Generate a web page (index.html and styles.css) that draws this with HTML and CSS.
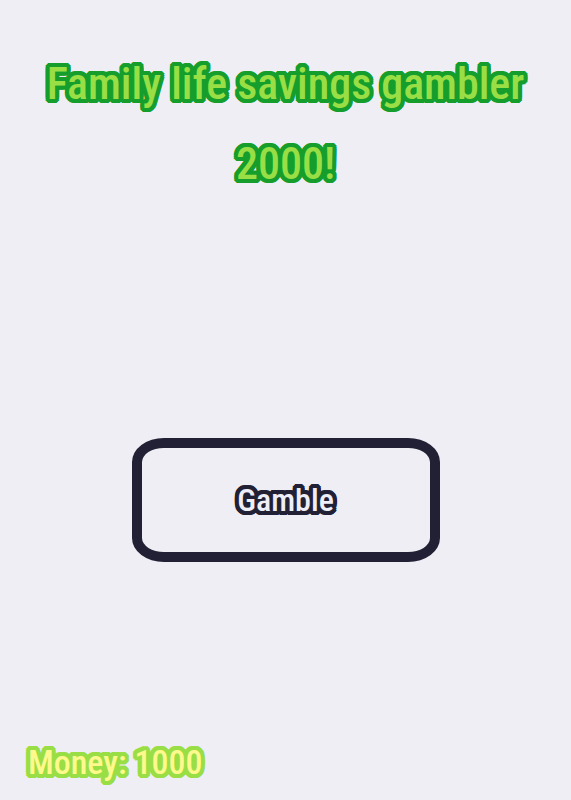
FILE: index.html
```html
<!DOCTYPE html>
<html lang="en">
<head>
<meta charset="utf-8">
<meta name="viewport" content="width=device-width, initial-scale=1">
<title>Family life savings gambler 2000!</title>
<link rel="stylesheet" href="styles.css">
</head>
<body>
<main class="game">
  <h1 class="title">Family life savings gambler 2000!</h1>
  <button class="gamble" type="button">Gamble</button>
  <p class="money">Money: 1000</p>
</main>
</body>
</html>
```
FILE: styles.css
```css
* {
  box-sizing: border-box;
}

body {
  margin: 0;
  background: #eeeef4;
  font-family: "Roboto Condensed", "Liberation Sans Narrow", "Liberation Sans", sans-serif;
}

.game {
  display: grid;
  grid-template-rows: 197fr auto 115fr;
  justify-items: center;
  min-height: 100vh;
  padding: 44px 28px 8px;
}

/* Rounded outline built from a ring of hard shadows */
.title,
.gamble,
.money {
  margin: 0;
  font-weight: 500;
  text-shadow:
    4px 0 var(--outline), -4px 0 var(--outline),
    0 4px var(--outline), 0 -4px var(--outline),
    4px 2px var(--outline), 4px -2px var(--outline),
    -4px 2px var(--outline), -4px -2px var(--outline),
    2px 4px var(--outline), 2px -4px var(--outline),
    -2px 4px var(--outline), -2px -4px var(--outline),
    3px 3px var(--outline), 3px -3px var(--outline),
    -3px 3px var(--outline), -3px -3px var(--outline),
    2px 0 var(--outline), -2px 0 var(--outline),
    0 2px var(--outline), 0 -2px var(--outline);
}

.title {
  --outline: #159e2c;
  font-size: 44px;
  line-height: 80px;
  text-align: center;
  color: #99de45;
}

.gamble {
  --outline: #222034;
  width: 308px;
  max-width: 100%;
  height: 124px;
  border: 10px solid #222034;
  border-radius: 32px / 24px;
  background: transparent;
  color: #eeeef8;
  font-family: inherit;
  font-size: 32px;
  cursor: pointer;
}

.money {
  --outline: #99de45;
  align-self: end;
  justify-self: start;
  font-size: 34px;
  line-height: 60px;
  color: #fdf98c;
}
```
